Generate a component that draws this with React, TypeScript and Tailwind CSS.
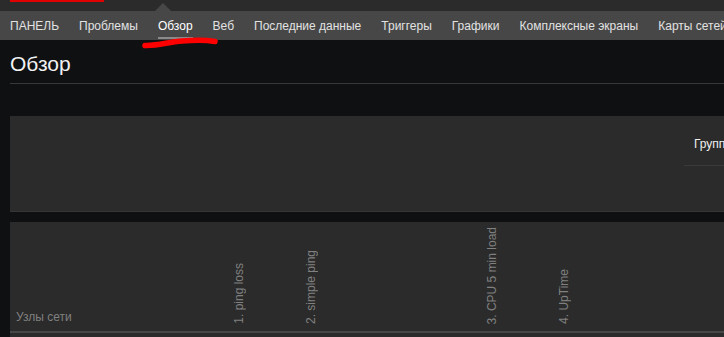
import React from "react";

const navItems = [
  "ПАНЕЛЬ",
  "Проблемы",
  "Обзор",
  "Веб",
  "Последние данные",
  "Триггеры",
  "Графики",
  "Комплексные экраны",
  "Карты сетей",
  "Обнаружение",
];

function VHead({ text }: { text: string }) {
  return (
    <span className="[writing-mode:vertical-rl] rotate-180 text-[12px] leading-[12px] text-[#808080] whitespace-nowrap">
      {text}
    </span>
  );
}

export default function App() {
  return (
    <div className="relative w-[724px] h-[337px] overflow-hidden bg-[#0f1012] font-['Liberation_Sans',Arial,sans-serif]">
      {/* top bar */}
      <div className="relative h-[11px] bg-[#2b2b2b]">
        <div className="absolute left-[10px] top-0 w-[94px] h-[2px] bg-[#e00000]" />
        <div className="absolute left-[155px] top-[3px] w-0 h-0 border-l-[8px] border-r-[8px] border-b-[8px] border-l-transparent border-r-transparent border-b-[#474747]" />
      </div>
      {/* nav */}
      <div className="flex h-[29px] items-center bg-[#474747] whitespace-nowrap">
        {navItems.map((n) => (
          <div
            key={n}
            className={
              "relative flex h-full items-center px-[10px] text-[12px] " +
              (n === "Обзор" ? "text-white" : "text-[#e2e2e2]")
            }
          >
            {n}
            {n === "Обзор" && (
              <div className="absolute left-[10px] right-[10px] bottom-[1px] h-[2px] bg-[#8a8a8a]" />
            )}
          </div>
        ))}
      </div>

      {/* title */}
      <div className="ml-[10px] mt-[11px] h-[33px] border-b border-[#383838] text-[21px] leading-[26px] text-[#f2f2f2]">
        Обзор
      </div>

      {/* filter box */}
      <div className="ml-[10px] mt-[32px] h-[96px] bg-[#2b2b2b] border-b border-[#353535] flex justify-end">
        <div className="w-[40px] pt-[21px]">
          <div className="h-[29px] border-b border-[#3a3a3a] pl-[10px] text-[12px] leading-[14px] text-[#f0f0f0] whitespace-nowrap overflow-hidden">
            Группа
          </div>
        </div>
      </div>

      {/* table */}
      <div className="ml-[10px] mt-[10px] bg-[#2b2b2b] h-[200px]">
        <div className="flex h-[111px] border-b-2 border-[#474747]">
          <div className="w-[222px] flex items-end pl-[6px] pb-[7px] text-[12px] leading-[14px] text-[#808080]">
            Узлы сети
          </div>
          <div className="w-[72px] flex items-end pl-[1px] pb-[7px]">
            <VHead text="1. ping loss" />
          </div>
          <div className="w-[181px] flex items-end pl-[1px] pb-[7px]">
            <VHead text="2. simple ping" />
          </div>
          <div className="w-[72px] flex items-end pl-[1px] pb-[7px]">
            <VHead text="3. CPU 5 min load" />
          </div>
          <div className="w-[72px] flex items-end pl-[1px] pb-[7px]">
            <VHead text="4. UpTime" />
          </div>
        </div>
      </div>

      {/* red annotation stroke */}
      <svg
        className="absolute left-0 top-0 pointer-events-none"
        width="724"
        height="337"
        viewBox="0 0 724 337"
      >
        <path
          d="M145 45.5 C158 46 168 42 182 41 C196 40 206 40 215 41.5"
          stroke="#ff0000"
          strokeWidth="5.5"
          strokeLinecap="round"
          fill="none"
        />
      </svg>
    </div>
  );
}
